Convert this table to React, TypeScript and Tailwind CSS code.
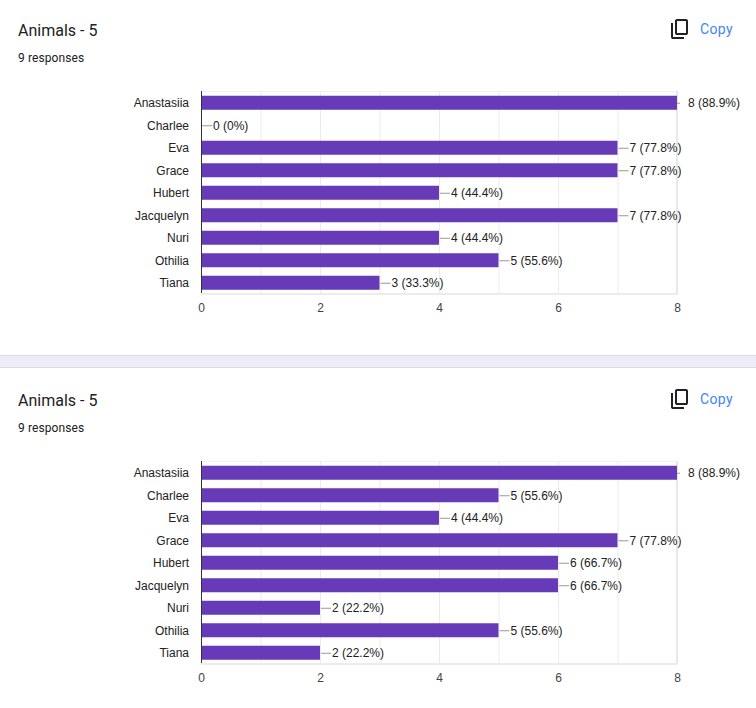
import React from "react";

type Row = { name: string; value: number; pct: string };

const data1: Row[] = [
  { name: "Anastasiia", value: 8, pct: "88.9%" },
  { name: "Charlee", value: 0, pct: "0%" },
  { name: "Eva", value: 7, pct: "77.8%" },
  { name: "Grace", value: 7, pct: "77.8%" },
  { name: "Hubert", value: 4, pct: "44.4%" },
  { name: "Jacquelyn", value: 7, pct: "77.8%" },
  { name: "Nuri", value: 4, pct: "44.4%" },
  { name: "Othilia", value: 5, pct: "55.6%" },
  { name: "Tiana", value: 3, pct: "33.3%" },
];

const data2: Row[] = [
  { name: "Anastasiia", value: 8, pct: "88.9%" },
  { name: "Charlee", value: 5, pct: "55.6%" },
  { name: "Eva", value: 4, pct: "44.4%" },
  { name: "Grace", value: 7, pct: "77.8%" },
  { name: "Hubert", value: 6, pct: "66.7%" },
  { name: "Jacquelyn", value: 6, pct: "66.7%" },
  { name: "Nuri", value: 2, pct: "22.2%" },
  { name: "Othilia", value: 5, pct: "55.6%" },
  { name: "Tiana", value: 2, pct: "22.2%" },
];

const X0 = 201;
const UNIT = 59.5;
const TOP = 27.5;
const PITCH = 22.5;
const BOTTOM = 229;

function Chart({ rows }: { rows: Row[] }) {
  return (
    <svg width={756} height={260} className="block font-['Liberation_Sans',Arial,sans-serif]">
      <line x1={X0} x2={X0 + 8 * UNIT} y1={27.5} y2={27.5} stroke="#f2f2f2" strokeWidth={1} />
      {[1, 2, 3, 4, 5, 6, 7].map((k) => (
        <line
          key={k}
          x1={X0 + k * UNIT + 0.5}
          x2={X0 + k * UNIT + 0.5}
          y1={27}
          y2={BOTTOM}
          stroke="#ebebeb"
          strokeWidth={1}
        />
      ))}
      <line x1={X0 + 8 * UNIT} x2={X0 + 8 * UNIT} y1={27} y2={BOTTOM + 2} stroke="#e8e8e8" strokeWidth={2} />
      <line x1={X0} x2={X0 + 8 * UNIT + 1} y1={BOTTOM + 1} y2={BOTTOM + 1} stroke="#ececec" strokeWidth={2} />
      {rows.map((r, i) => {
        const cy = TOP + PITCH * (i + 0.5);
        const end = X0 + r.value * UNIT;
        const isMax = r.value === 8;
        return (
          <g key={r.name}>
            <text x={189} y={cy + 4.3} textAnchor="end" fontSize={12} fill="#222">
              {r.name}
            </text>
            {r.value > 0 && <rect x={X0} y={cy - 7} width={r.value * UNIT} height={14} fill="#673ab7" />}
            {isMax ? (
              <>
                <line x1={end} x2={end + 3} y1={cy + 0.5} y2={cy + 0.5} stroke="#999" strokeWidth={1} />
                <text x={end + 11} y={cy + 4.3} fontSize={12} fill="#222">
                  {`${r.value} (${r.pct})`}
                </text>
              </>
            ) : (
              <>
                <line x1={end + 1} x2={end + 11} y1={cy + 0.5} y2={cy + 0.5} stroke="#999" strokeWidth={1} />
                <text x={end + 12} y={cy + 4.3} fontSize={12} fill="#222">
                  {`${r.value} (${r.pct})`}
                </text>
              </>
            )}
          </g>
        );
      })}
      <line x1={X0 + 0.5} x2={X0 + 0.5} y1={27} y2={BOTTOM} stroke="#333" strokeWidth={1} />
      {[0, 2, 4, 6, 8].map((k) => (
        <text key={k} x={X0 + k * UNIT + 0.5} y={247.5} textAnchor="middle" fontSize={12} fill="#444">
          {k}
        </text>
      ))}
    </svg>
  );
}

function CopyIcon() {
  return (
    <svg width={24} height={24} viewBox="0 0 24 24" className="block">
      <path
        fill="#202124"
        d="M9 18q-.825 0-1.413-.587T7 16V4q0-.825.588-1.413T9 2h9q.825 0 1.413.588T20 4v12q0 .825-.587 1.413T18 18H9Zm0-2h9V4H9v12Zm-4 6q-.825 0-1.413-.587T3 20V6h2v14h11v2H5Z"
      />
    </svg>
  );
}

function Card({ rows, pt }: { rows: Row[]; pt: string }) {
  return (
    <div className={`bg-white ${pt}`}>
      <div className="flex items-start justify-between pl-[18px] pr-[23px]">
        <div className="font-['Roboto',sans-serif] text-[16px] leading-[24px] text-[#202124]">Animals - 5</div>
        <div className="-mt-[2px] flex items-center gap-[8px]">
          <CopyIcon />
          <span className="font-['Roboto',sans-serif] text-[14px] leading-[24px] font-normal text-[#4285f4] tracking-[0.4px]">
            Copy
          </span>
        </div>
      </div>
      <div className="mt-[7px] pl-[18px] font-['Roboto',sans-serif] text-[12px] leading-[16px] tracking-[0.1px] text-[#202124]">
        9 responses
      </div>
      <div className="-mt-[2px]">
        <Chart rows={rows} />
      </div>
    </div>
  );
}

export default function App() {
  return (
    <div className="w-[756px] h-[708px] overflow-hidden bg-white">
      <div className="h-[355px] overflow-hidden">
        <Card rows={data1} pt="pt-[19px]" />
      </div>
      <div className="h-[13px] border-y border-[#dadce0] bg-[#efebf8]" />
      <div className="h-[340px] overflow-hidden">
        <Card rows={data2} pt="pt-[21px]" />
      </div>
    </div>
  );
}
